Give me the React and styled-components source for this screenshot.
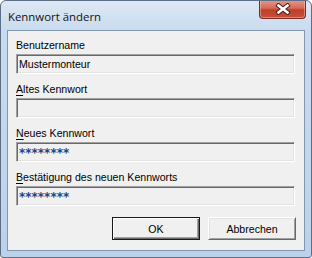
import React from "react";
import styled, { createGlobalStyle } from "styled-components";

const Global = createGlobalStyle`
  html, body { margin: 0; padding: 0; background: #ffffff; }
  #root { width: 312px; height: 258px; }
`;

const Window = styled.div`
  box-sizing: border-box;
  width: 312px;
  height: 258px;
  border: 1px solid #5d6f86;
  border-radius: 6px 6px 3px 3px;
  background: linear-gradient(180deg, #dde8f4 0px, #c9dbee 30px, #bcd2ea 100%);
  display: flex;
  flex-direction: column;
  font-family: "Liberation Sans", Arial, sans-serif;
  overflow: hidden;
`;

const TitleBar = styled.div`
  height: 29px;
  display: flex;
  align-items: flex-start;
  justify-content: space-between;
  padding-left: 7px;
  padding-right: 5px;
`;

const Title = styled.div`
  margin-top: 8px;
  font-family: "Open Sans", "Liberation Sans", sans-serif;
  font-size: 11.4px;
  color: #111;
`;

const CloseButton = styled.div`
  box-sizing: border-box;
  width: 47px;
  height: 19px;
  margin-top: -1px;
  border: 1px solid #7a2a22;
  border-top: none;
  border-radius: 0 0 4px 4px;
  background: linear-gradient(180deg, #e49a8c 0%, #d66a56 45%, #bf3f2a 55%, #c94f38 100%);
  box-shadow: inset 0 0 0 1px rgba(255, 210, 200, 0.45);
  display: flex;
  align-items: center;
  justify-content: center;
`;

const Client = styled.div`
  flex: 1;
  margin: 0 6px 6px 6px;
  border: 1px solid #8196b0;
  background: #f0f0f0;
  display: flex;
  flex-direction: column;
  padding: 7px 9px 8px 8px;
`;

const Field = styled.div`
  display: flex;
  flex-direction: column;
  gap: 1px;
  margin-bottom: 8px;
`;

const Label = styled.div`
  font-size: 10.6px;
  line-height: 15px;
  color: #000;
`;

const Key = styled.span`
  text-decoration: underline;
  text-underline-offset: 2px;
`;

const Input = styled.div`
  box-sizing: border-box;
  height: 20px;
  border-top: 1px solid #a0a0a0;
  border-left: 1px solid #a0a0a0;
  border-right: 1px solid #ffffff;
  border-bottom: 1px solid #ffffff;
  box-shadow: inset 1px 1px 0 #696969, inset -1px -1px 0 #e3e3e3;
  background: #f0f0f0;
  padding: ${(p) => (p.$masked ? "3px 2px 0 2px" : "2px 2px 0 2px")};
  font-family: ${(p) => (p.$masked ? '"DejaVu Sans", sans-serif' : '"Liberation Sans", Arial, sans-serif')};
  font-weight: ${(p) => (p.$masked ? 700 : 400)};
  font-size: ${(p) => (p.$masked ? "12px" : "10.6px")};
  line-height: 14px;
  color: ${(p) => (p.$masked ? "#23457c" : "#000")};
  white-space: nowrap;
`;

const ButtonRow = styled.div`
  margin-top: 3px;
  display: flex;
  justify-content: flex-end;
  gap: 8px;
  margin-right: -1px;
`;

const Button = styled.div`
  box-sizing: border-box;
  width: 88px;
  height: 23px;
  display: flex;
  align-items: center;
  justify-content: center;
  font-size: 10.6px;
  color: #000;
  background: #f0f0f0;
  ${(p) =>
    p.$default
      ? `
    border: 1px solid #1a1a1a;
    box-shadow: inset 1px 1px 0 #ffffff, inset -1px -1px 0 #696969, inset -2px -2px 0 #a0a0a0;
  `
      : `
    border-top: 1px solid #ffffff;
    border-left: 1px solid #ffffff;
    border-right: 1px solid #696969;
    border-bottom: 1px solid #696969;
    box-shadow: inset 1px 1px 0 #e3e3e3, inset -1px -1px 0 #a0a0a0;
  `}
`;

const CloseIcon = () => (
  <svg width="16" height="12" viewBox="0 0 16 12">
    <path d="M3.5 2.5 L12.5 9.5 M12.5 2.5 L3.5 9.5" stroke="#4a1a14" strokeWidth="4.4" strokeLinecap="square" />
    <path d="M3.5 2.5 L12.5 9.5 M12.5 2.5 L3.5 9.5" stroke="#ffffff" strokeWidth="2.6" strokeLinecap="square" />
  </svg>
);

export default function App() {
  return (
    <>
      <Global />
      <Window>
        <TitleBar>
          <Title>Kennwort ändern</Title>
          <CloseButton>
            <CloseIcon />
          </CloseButton>
        </TitleBar>
        <Client>
          <Field>
            <Label>Benutzername</Label>
            <Input>Mustermonteur</Input>
          </Field>
          <Field>
            <Label>
              <Key>A</Key>ltes Kennwort
            </Label>
            <Input />
          </Field>
          <Field>
            <Label>
              <Key>N</Key>eues Kennwort
            </Label>
            <Input $masked>********</Input>
          </Field>
          <Field>
            <Label>
              <Key>B</Key>estätigung des neuen Kennworts
            </Label>
            <Input $masked>********</Input>
          </Field>
          <ButtonRow>
            <Button $default>OK</Button>
            <Button>Abbrechen</Button>
          </ButtonRow>
        </Client>
      </Window>
    </>
  );
}
